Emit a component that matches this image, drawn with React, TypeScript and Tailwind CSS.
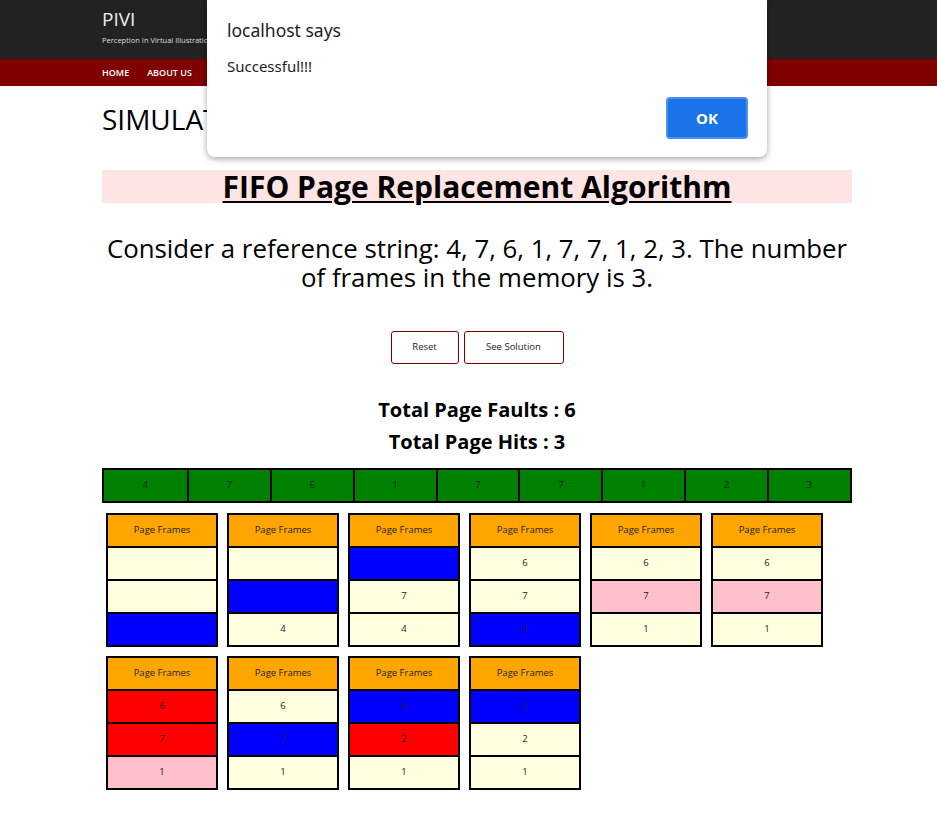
import React from "react";

type Cell = { v: string; c: string };

const LY = "bg-[#ffffe0]";
const BL = "bg-[#0000ff]";
const RD = "bg-[#ff0000]";
const PK = "bg-[#ffc0cb]";

const refString = ["4", "7", "6", "1", "7", "7", "1", "2", "3"];

const frames: Cell[][] = [
    [{ v: "", c: LY }, { v: "", c: LY }, { v: "", c: BL }],
    [{ v: "", c: LY }, { v: "", c: BL }, { v: "4", c: LY }],
    [{ v: "", c: BL }, { v: "7", c: LY }, { v: "4", c: LY }],
    [{ v: "6", c: LY }, { v: "7", c: LY }, { v: "4", c: BL }],
    [{ v: "6", c: LY }, { v: "7", c: PK }, { v: "1", c: LY }],
    [{ v: "6", c: LY }, { v: "7", c: PK }, { v: "1", c: LY }],
    [{ v: "6", c: RD }, { v: "7", c: RD }, { v: "1", c: PK }],
    [{ v: "6", c: LY }, { v: "7", c: BL }, { v: "1", c: LY }],
    [{ v: "6", c: BL }, { v: "2", c: RD }, { v: "1", c: LY }],
    [{ v: "3", c: BL }, { v: "2", c: LY }, { v: "1", c: LY }],
];

const FrameCard = ({ cells }: { cells: Cell[] }) => (
    <div className="w-[112px] border-2 border-black flex flex-col">
        <div className="h-[31px] bg-[#ffa500] flex items-center justify-center text-[9.5px] text-[#222]">
            Page Frames
        </div>
        {cells.map((cell, i) => (
            <div key={i} className={`h-[33px] border-t-2 border-black flex items-center justify-center text-[9.5px] text-[#222] ${cell.c}`}>
                {cell.v}
            </div>
        ))}
    </div>
);

const App = () => {
    return (
        <div className="relative w-[937px] h-[823px] bg-white overflow-hidden font-['Open_Sans',sans-serif]">
            <div className="h-[59px] bg-[#222222] pl-[102px] pt-[7px]">
                <div className="text-[19px] leading-[24px] text-[#eeeeee]">PIVI</div>
                <div className="mt-[4px] whitespace-nowrap text-[7.5px] leading-[10px] text-[#dddddd]">
                    Perception In Virtual Illustration
                </div>
            </div>
            <div className="h-[27px] bg-[#800000] pl-[102px] flex items-center gap-[18px] text-[9px] font-semibold text-white">
                <span>HOME</span>
                <span>ABOUT US</span>
            </div>

            <div className="ml-[102px] w-[750px] text-black">
                <h1 className="mt-[16px] text-[28px] leading-[34px] font-normal">SIMULATION</h1>

                <div className="mt-[34px] h-[33px] bg-[#ffe4e4] flex items-center justify-center">
                    <h2 className="text-[30px] leading-[33px] font-bold underline underline-offset-[3px] decoration-2">
                        FIFO Page Replacement Algorithm
                    </h2>
                </div>

                <p className="mt-[31px] text-center text-[25.8px] leading-[29px]">
                    Consider a reference string: 4, 7, 6, 1, 7, 7, 1, 2, 3. The number of frames in the memory is 3.
                </p>

                <div className="mt-[39px] flex justify-center gap-[5px]">
                    <button className="w-[68px] h-[33px] border border-[#800000] rounded-[3px] bg-white text-[9.5px] text-[#222]">
                        Reset
                    </button>
                    <button className="w-[100px] h-[33px] border border-[#800000] rounded-[3px] bg-white text-[9.5px] text-[#222]">
                        See Solution
                    </button>
                </div>

                <div className="mt-[30px] text-center text-[20px] leading-[32px] font-bold">
                    <div>Total Page Faults : 6</div>
                    <div>Total Page Hits : 3</div>
                </div>

                <div className="mt-[10px] h-[35px] border-2 border-black bg-[#008000] grid grid-cols-9">
                    {refString.map((v, i) => (
                        <div key={i} className={`flex items-center justify-center text-[9.5px] text-[#222] ${i > 0 ? "border-l-2 border-black" : ""}`}>
                            {v}
                        </div>
                    ))}
                </div>

                <div className="mt-[10px] pl-[4px] flex flex-wrap gap-x-[9px] gap-y-[9px]">
                    {frames.map((cells, i) => (
                        <FrameCard key={i} cells={cells} />
                    ))}
                </div>
            </div>

            {/* browser alert */}
            <div className="absolute left-[207px] top-0 w-[560px] h-[157px] bg-white rounded-b-[8px] shadow-[0_2px_6px_rgba(0,0,0,0.35)] font-['Noto_Sans',sans-serif] text-[#202124]">
                <div className="pl-[20px] pt-[18px] text-[17.5px] leading-[24px]">localhost says</div>
                <div className="pl-[20px] mt-[14px] text-[15px] leading-[20px]">Successful!!!</div>
                <button className="absolute right-[19px] bottom-[18px] w-[82px] h-[42px] rounded-[4px] bg-[#1a73e8] border-2 border-[#4d8ef0] text-white text-[15px] font-bold">
                    OK
                </button>
            </div>
        </div>
    );
};

export default App;
